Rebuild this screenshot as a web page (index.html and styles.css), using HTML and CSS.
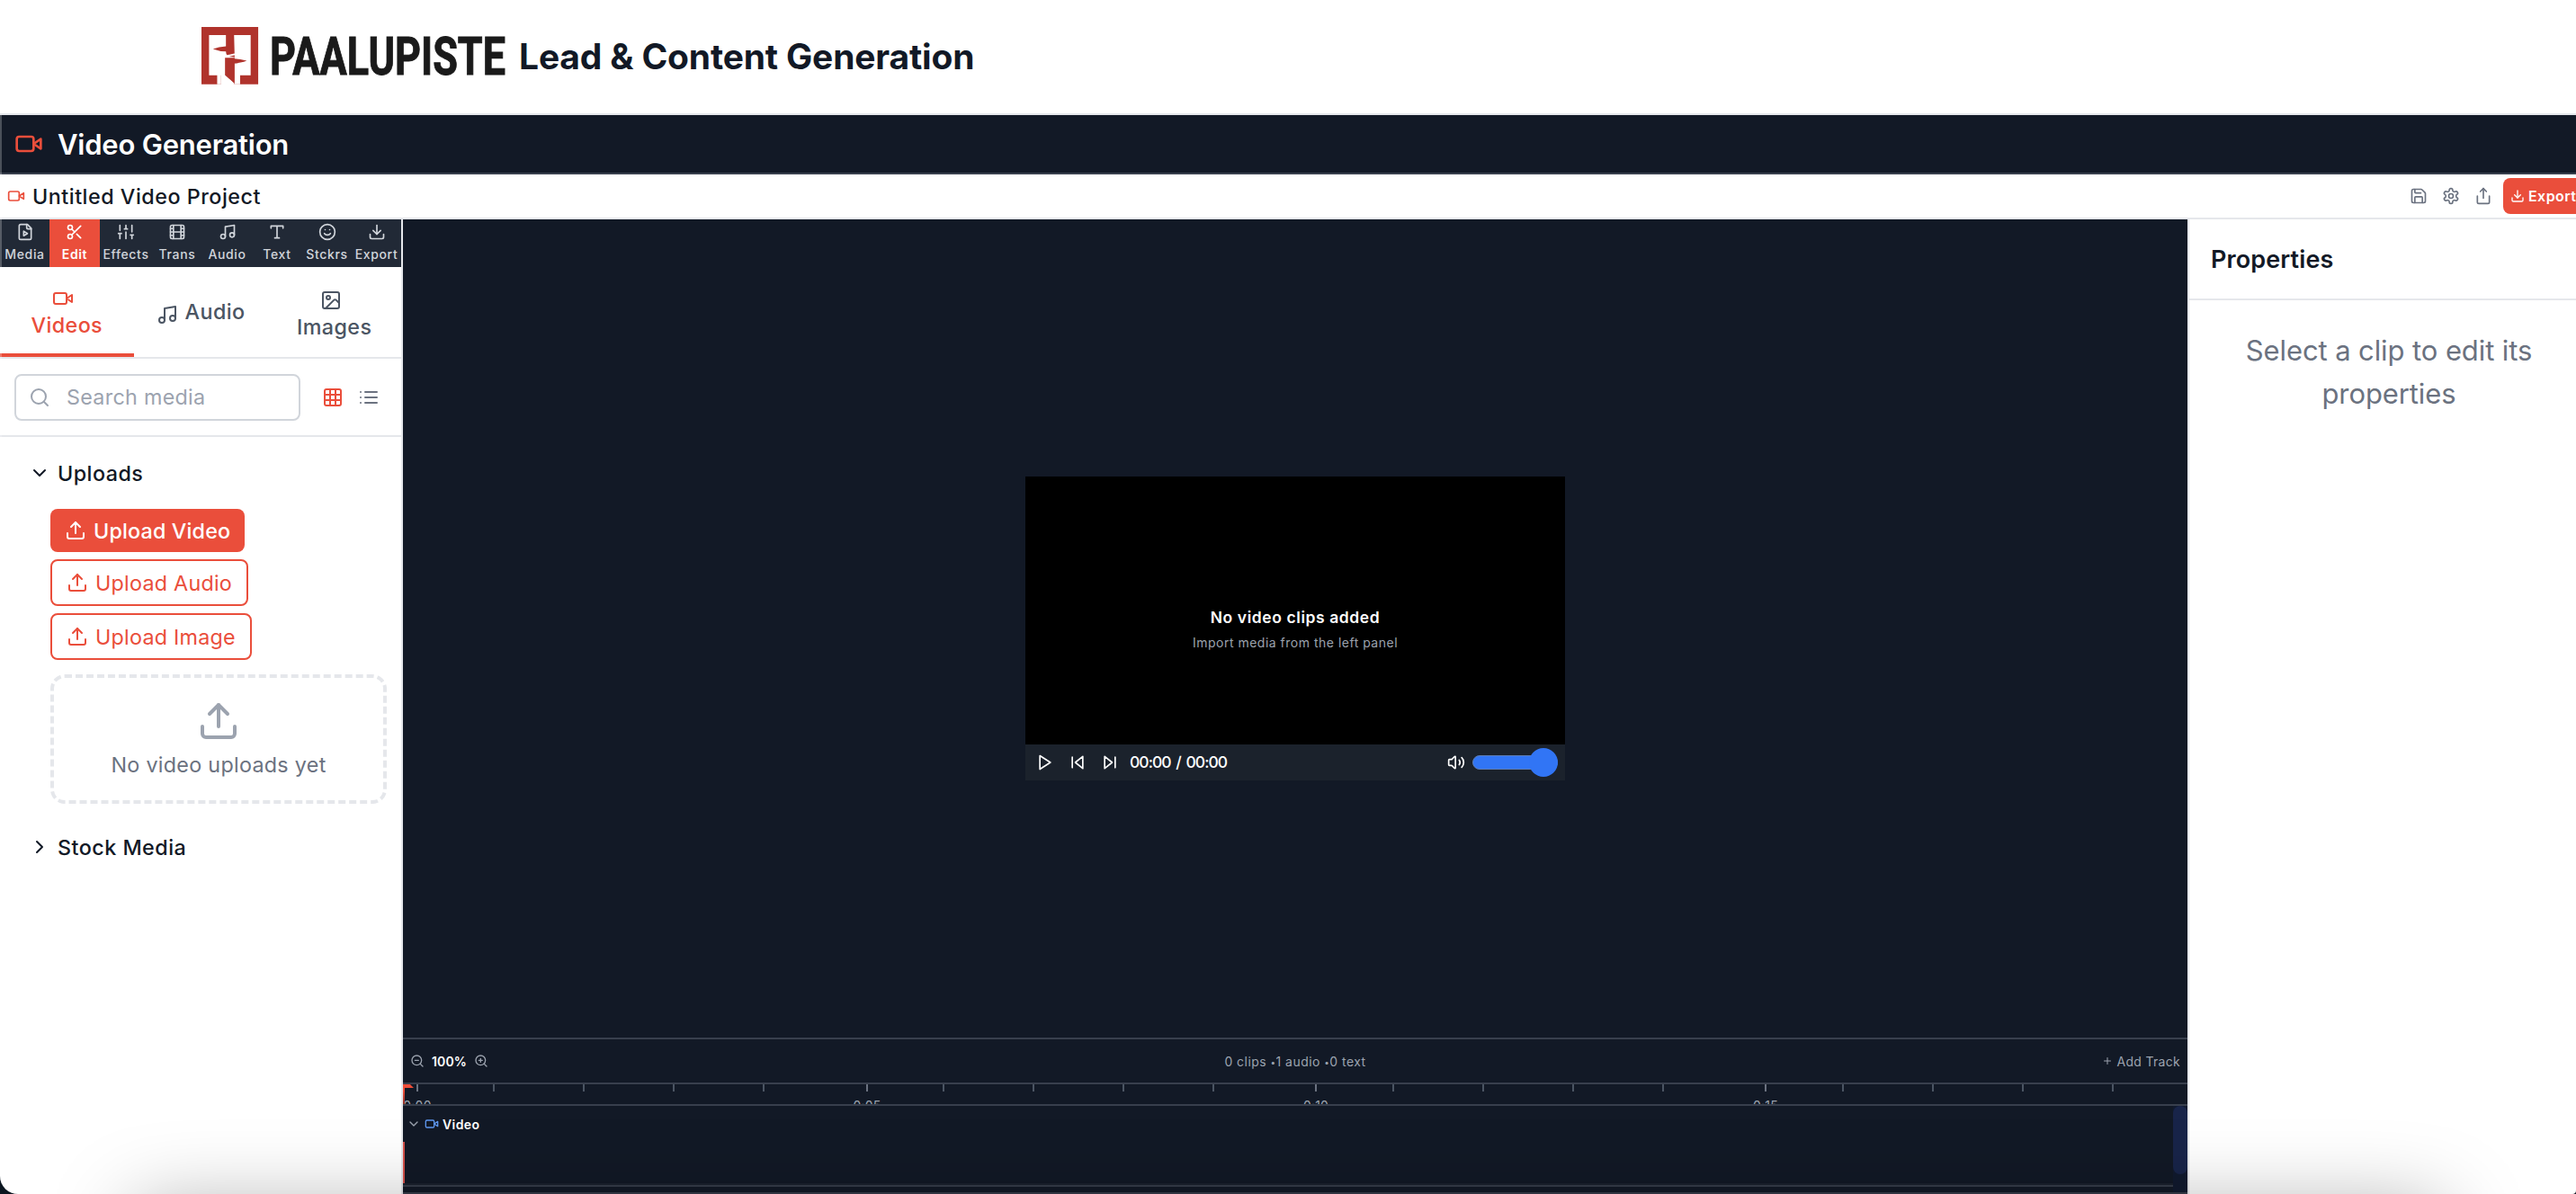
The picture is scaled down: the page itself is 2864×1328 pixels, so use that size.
FILE: index.html
```html
<!DOCTYPE html>
<html lang="en">
<head>
<meta charset="utf-8">
<title>Lead &amp; Content Generation</title>
<link rel="stylesheet" href="styles.css">
</head>
<body>
<svg class="defs" aria-hidden="true">
  <symbol id="video" viewBox="0 0 24 24"><path d="m22 8-6 4 6 4V8Z"/><rect x="2" y="6" width="14" height="12" rx="2"/></symbol>
  <symbol id="save" viewBox="0 0 24 24"><path d="M15.2 3a2 2 0 0 1 1.4.6l3.8 3.8a2 2 0 0 1 .6 1.4V19a2 2 0 0 1-2 2H5a2 2 0 0 1-2-2V5a2 2 0 0 1 2-2z"/><path d="M17 21v-7a1 1 0 0 0-1-1H8a1 1 0 0 0-1 1v7"/><path d="M7 3v4a1 1 0 0 0 1 1h7"/></symbol>
  <symbol id="settings" viewBox="0 0 24 24"><path d="M12.22 2h-.44a2 2 0 0 0-2 2v.18a2 2 0 0 1-1 1.73l-.43.25a2 2 0 0 1-2 0l-.15-.08a2 2 0 0 0-2.73.73l-.22.38a2 2 0 0 0 .73 2.73l.15.1a2 2 0 0 1 1 1.72v.51a2 2 0 0 1-1 1.74l-.15.09a2 2 0 0 0-.73 2.73l.22.38a2 2 0 0 0 2.73.73l.15-.08a2 2 0 0 1 2 0l.43.25a2 2 0 0 1 1 1.73V20a2 2 0 0 0 2 2h.44a2 2 0 0 0 2-2v-.18a2 2 0 0 1 1-1.73l.43-.25a2 2 0 0 1 2 0l.15.08a2 2 0 0 0 2.73-.73l.22-.39a2 2 0 0 0-.73-2.73l-.15-.08a2 2 0 0 1-1-1.74v-.5a2 2 0 0 1 1-1.74l.15-.09a2 2 0 0 0 .73-2.73l-.22-.38a2 2 0 0 0-2.73-.73l-.15.08a2 2 0 0 1-2 0l-.43-.25a2 2 0 0 1-1-1.73V4a2 2 0 0 0-2-2z"/><circle cx="12" cy="12" r="3"/></symbol>
  <symbol id="share" viewBox="0 0 24 24"><path d="M4 12v8a2 2 0 0 0 2 2h12a2 2 0 0 0 2-2v-8"/><path d="m16 6-4-4-4 4"/><path d="M12 2v13"/></symbol>
  <symbol id="download" viewBox="0 0 24 24"><path d="M21 15v4a2 2 0 0 1-2 2H5a2 2 0 0 1-2-2v-4"/><path d="m7 10 5 5 5-5"/><path d="M12 15V3"/></symbol>
  <symbol id="upload" viewBox="0 0 24 24"><path d="M21 15v4a2 2 0 0 1-2 2H5a2 2 0 0 1-2-2v-4"/><path d="m17 8-5-5-5 5"/><path d="M12 3v12"/></symbol>
  <symbol id="file-video" viewBox="0 0 24 24"><path d="M15 2H6a2 2 0 0 0-2 2v16a2 2 0 0 0 2 2h12a2 2 0 0 0 2-2V7Z"/><path d="M14 2v4a2 2 0 0 0 2 2h4"/><path d="m10 11 5 3-5 3v-6Z"/></symbol>
  <symbol id="scissors" viewBox="0 0 24 24"><circle cx="6" cy="6" r="3"/><path d="M8.12 8.12 12 12"/><path d="M20 4 8.12 15.88"/><circle cx="6" cy="18" r="3"/><path d="M14.8 14.8 20 20"/></symbol>
  <symbol id="sliders" viewBox="0 0 24 24"><path d="M4 21v-7M4 10V3M12 21v-9M12 8V3M20 21v-5M20 12V3M2 14h4M10 8h4M18 16h4"/></symbol>
  <symbol id="film" viewBox="0 0 24 24"><rect x="3" y="3" width="18" height="18" rx="2"/><path d="M7 3v18M3 7.5h4M3 12h18M3 16.5h4M17 3v18M17 7.5h4M17 16.5h4"/></symbol>
  <symbol id="music" viewBox="0 0 24 24"><path d="M9 18V5l12-2v13"/><circle cx="6" cy="18" r="3"/><circle cx="18" cy="16" r="3"/></symbol>
  <symbol id="type" viewBox="0 0 24 24"><path d="M4 7V4h16v3M9 20h6M12 4v16"/></symbol>
  <symbol id="smile" viewBox="0 0 24 24"><circle cx="12" cy="12" r="10"/><path d="M8 14s1.500 2 4 2 4-2 4-2M9 9h.01M15 9h.01"/></symbol>
  <symbol id="image" viewBox="0 0 24 24"><rect x="3" y="3" width="18" height="18" rx="2"/><circle cx="9" cy="9" r="2"/><path d="m21 15-3.086-3.086a2 2 0 0 0-2.828 0L6 21"/></symbol>
  <symbol id="search" viewBox="0 0 24 24"><circle cx="11" cy="11" r="8"/><path d="m21 21-4.3-4.3"/></symbol>
  <symbol id="zoom-out" viewBox="0 0 24 24"><circle cx="11" cy="11" r="8"/><path d="m21 21-4.35-4.35M8 11h6"/></symbol>
  <symbol id="zoom-in" viewBox="0 0 24 24"><circle cx="11" cy="11" r="8"/><path d="m21 21-4.35-4.35M11 8v6M8 11h6"/></symbol>
  <symbol id="grid" viewBox="0 0 24 24"><rect x="3" y="3" width="18" height="18" rx="2"/><path d="M3 9h18M3 15h18M9 3v18M15 3v18"/></symbol>
  <symbol id="list" viewBox="0 0 24 24"><path d="M8 6h13M8 12h13M8 18h13M3 6h.01M3 12h.01M3 18h.01"/></symbol>
  <symbol id="chev-down" viewBox="0 0 24 24"><path d="m6 9 6 6 6-6"/></symbol>
  <symbol id="chev-right" viewBox="0 0 24 24"><path d="m9 18 6-6-6-6"/></symbol>
  <symbol id="play" viewBox="0 0 24 24"><path d="m5 3 14 9-14 9V3z"/></symbol>
  <symbol id="prev" viewBox="0 0 24 24"><path d="M19 20 9 12l10-8v16zM5 19V5"/></symbol>
  <symbol id="next" viewBox="0 0 24 24"><path d="m5 4 10 8-10 8V4zM19 5v14"/></symbol>
  <symbol id="volume" viewBox="0 0 24 24"><path d="M11 4.702a.705.705 0 0 0-1.203-.498L6.413 7.587A1.400 1.400 0 0 1 5.416 8H3a1 1 0 0 0-1 1v6a1 1 0 0 0 1 1h2.416a1.400 1.400 0 0 1 .997.413l3.383 3.384A.705.705 0 0 0 11 19.298z"/><path d="M16 9a5 5 0 0 1 0 6"/><path d="M19.364 18.364a9 9 0 0 0 0-12.728"/></symbol>
  <symbol id="plus" viewBox="0 0 24 24"><path d="M5 12h14M12 5v14"/></symbol>
</svg>

<div class="page">
  <header class="brand">
    <svg class="logo" viewBox="0 0 340 64" role="img" aria-label="Paalupiste">
      <g transform="scale(.3355) translate(-27 -30)">
        <path class="logo-mark" d="M27 30h188v190H27z"/>
        <path class="logo-cut" d="M52 57h56v37q-24 2-43 9 20 8 43 8 0 8 4 12l24-5 2 5-20 5q24 0 60 14-18 7-41 9v68l-45-29v30h-13v-30H52zM135 57h55v133h-35v30h-18v-68q24-4 40-10-18-7-40-9z"/>
        <path class="logo-mark" d="M105 132h32v88l-32-30z"/>
        <path class="logo-cut" d="M92 190h13l31 27v4H92z"/>
        <path class="logo-mark" d="M130 134q28 2 47 8-18 8-47 9z"/>
      </g>
      <g transform="translate(76 53) scale(.753 1)"><text class="logo-text" textLength="348" lengthAdjust="spacingAndGlyphs">PAALUPISTE</text></g>
    </svg>
    <h1 class="brand-title">Lead &amp; Content Generation</h1>
  </header>

  <div class="section-bar">
    <svg class="i i32 red"><use href="#video"/></svg>
    <h2 class="section-title">Video Generation</h2>
  </div>

  <div class="project-bar">
    <svg class="i i20 red"><use href="#video"/></svg>
    <span class="project-name">Untitled Video Project</span>
    <div class="project-actions">
      <svg class="i i20"><use href="#save"/></svg>
      <svg class="i i20"><use href="#settings"/></svg>
      <svg class="i i20"><use href="#share"/></svg>
      <button class="export"><svg class="i i16"><use href="#download"/></svg><span>Export</span></button>
    </div>
  </div>

  <div class="workspace">
    <aside class="sidebar">
      <nav class="tools">
        <a class="tool"><svg class="i i20"><use href="#file-video"/></svg>Media</a>
        <a class="tool active"><svg class="i i20"><use href="#scissors"/></svg>Edit</a>
        <a class="tool"><svg class="i i20"><use href="#sliders"/></svg>Effects</a>
        <a class="tool"><svg class="i i20"><use href="#film"/></svg>Trans</a>
        <a class="tool"><svg class="i i20"><use href="#music"/></svg>Audio</a>
        <a class="tool"><svg class="i i20"><use href="#type"/></svg>Text</a>
        <a class="tool"><svg class="i i20"><use href="#smile"/></svg>Stckrs</a>
        <a class="tool"><svg class="i i20"><use href="#download"/></svg>Export</a>
      </nav>
      <div class="tabs">
        <div class="tab active"><svg class="i i24"><use href="#video"/></svg><span>Videos</span></div>
        <div class="tab inline"><svg class="i i24"><use href="#music"/></svg><span>Audio</span></div>
        <div class="tab images"><svg class="i i24"><use href="#image"/></svg><span>Images</span></div>
      </div>
      <div class="search-row">
        <div class="search"><svg class="i i24"><use href="#search"/></svg><span>Search media</span></div>
        <svg class="i i24 red"><use href="#grid"/></svg>
        <svg class="i i24 muted"><use href="#list"/></svg>
      </div>
      <div class="library">
        <div class="group"><svg class="i i24"><use href="#chev-down"/></svg><span>Uploads</span></div>
        <div class="uploads">
          <button class="up solid"><svg class="i i24"><use href="#upload"/></svg><span>Upload Video</span></button>
          <button class="up"><svg class="i i24"><use href="#upload"/></svg><span>Upload Audio</span></button>
          <button class="up wide"><svg class="i i24"><use href="#upload"/></svg><span>Upload Image</span></button>
          <div class="dropzone"><svg class="i i48"><use href="#upload"/></svg><span>No video uploads yet</span></div>
        </div>
        <div class="group"><svg class="i i24"><use href="#chev-right"/></svg><span>Stock Media</span></div>
      </div>
    </aside>

    <main class="editor">
      <div class="stage">
        <div class="player">
          <div class="screen">
            <p class="empty-title">No video clips added</p>
            <p class="empty-hint">Import media from the left panel</p>
          </div>
          <div class="controls">
            <svg class="i i20"><use href="#play"/></svg>
            <svg class="i i20"><use href="#prev"/></svg>
            <svg class="i i20"><use href="#next"/></svg>
            <span class="time">00:00 / 00:00</span>
            <svg class="i i20 vol"><use href="#volume"/></svg>
            <div class="slider"><div class="knob"></div></div>
          </div>
        </div>
      </div>

      <section class="timeline">
        <div class="tl-bar">
          <div class="zoom"><svg class="i i16"><use href="#zoom-out"/></svg><b>100%</b><svg class="i i16"><use href="#zoom-in"/></svg></div>
          <span class="counts">0 clips <small>•</small>1 audio <small>•</small>0 text</span>
          <div class="add"><svg class="i i12"><use href="#plus"/></svg><span>Add Track</span></div>
        </div>
        <div class="ruler">
          <div class="mark" style="left:16px"><span>0:00</span></div>
          <i class="tick" style="left:100px"></i><i class="tick" style="left:200px"></i><i class="tick" style="left:300px"></i><i class="tick" style="left:400px"></i>
          <div class="mark" style="left:516px"><span>0:05</span></div>
          <i class="tick" style="left:600px"></i><i class="tick" style="left:700px"></i><i class="tick" style="left:800px"></i><i class="tick" style="left:900px"></i>
          <div class="mark" style="left:1015px"><span>0:10</span></div>
          <i class="tick" style="left:1100px"></i><i class="tick" style="left:1200px"></i><i class="tick" style="left:1300px"></i><i class="tick" style="left:1400px"></i>
          <div class="mark" style="left:1515px"><span>0:15</span></div>
          <i class="tick" style="left:1600px"></i><i class="tick" style="left:1700px"></i><i class="tick" style="left:1800px"></i><i class="tick" style="left:1900px"></i>
          <div class="playhead"></div>
        </div>
        <div class="tracks">
          <div class="track">
            <div class="track-head"><svg class="i i16"><use href="#chev-down"/></svg><svg class="i i16 blue"><use href="#video"/></svg><b>Video</b></div>
            <div class="track-lane"></div>
          </div>
          <div class="scrollbar"><div class="thumb"></div></div>
        </div>
        <div class="tl-end"></div>
      </section>
    </main>

    <aside class="props">
      <h3 class="props-title">Properties</h3>
      <p class="props-empty">Select a clip to edit its properties</p>
    </aside>
  </div>
  <div class="dock-shadow"></div>
</div>
</body>
</html>
```

FILE: styles.css
```css
:root {
  --red: #ea4e3b;
  --ink: #121926;
  --line: #e5e7eb;
  --dark: #121926;
  --dark-line: #383f4d;
}
* { box-sizing: border-box; margin: 0; padding: 0; }
html { background: #0c1620; }
body { font-family: Inter, "Liberation Sans", sans-serif; font-size: 23.3px; color: var(--ink); overflow: hidden; }
button { font: inherit; border: 0; background: none; }
.defs { position: absolute; width: 0; height: 0; }

.i { flex: none; display: block; fill: none; stroke: currentColor; stroke-width: 2; stroke-linecap: round; stroke-linejoin: round; }
.i12 { width: 12px; height: 12px; }
.i16 { width: 16px; height: 16px; }
.i20 { width: 20px; height: 20px; }
.i24 { width: 24px; height: 24px; }
.i32 { width: 32px; height: 32px; }
.i48 { width: 48px; height: 48px; }
.red { color: var(--red); }
.muted { color: #6b7280; }
.blue { color: #5e97ee; }

.page { position: relative; width: 2864px; height: 1328px; display: flex; flex-direction: column; overflow: hidden; background: #fff; border-radius: 0 0 4px 20px; }
/* window edge highlight */
.page::after { content: ""; position: absolute; left: 0; top: 128px; bottom: 0; width: 2px; background: rgba(255, 255, 255, .24); }

.brand { flex: none; height: 128px; padding-left: 224px; display: flex; align-items: center; border-bottom: 2px solid var(--line); }
.logo { width: 340px; height: 64px; margin: 0 13px 2px 0; }
.logo-mark { fill: #b0332c; }
.logo-cut { fill: #fff; }
.logo-text { font: 700 59px Roboto, sans-serif; fill: #1a1a1a; stroke: #1a1a1a; stroke-width: 1; }
.brand-title { font-size: 39px; font-weight: 700; letter-spacing: -.17px; line-height: 56px; }

.section-bar { flex: none; height: 66px; padding-left: 16px; display: flex; align-items: center; gap: 16px; background: var(--dark); border-bottom: 2px solid var(--dark-line); color: #fff; }
.section-title { font-size: 31px; font-weight: 600; letter-spacing: -.22px; }

.project-bar { flex: none; height: 50px; width: 2880px; padding-left: 8px; display: flex; align-items: center; gap: 8px; border-bottom: 2px solid var(--line); }
.project-name { font-weight: 500; letter-spacing: .52px; }
.project-actions { margin-left: auto; display: flex; align-items: center; gap: 16px; color: #6b7280; }
.export { width: 97px; height: 40px; margin-left: -4px; padding-left: 8px; display: flex; align-items: center; gap: 4px; border-radius: 8px; background: var(--red); color: #fff; font-size: 16px; font-weight: 600; letter-spacing: .43px; }

.workspace { flex: 1; min-height: 0; display: flex; width: 2882px; }

.sidebar { flex: none; width: 448px; border-right: 2px solid var(--line); display: flex; flex-direction: column; }
.tools { height: 53px; display: grid; grid-template-columns: 55px 56px 58px 56px 55px 56px 55px 55px; background: #212936; }
.tool { min-width: 0; padding-top: 4px; display: flex; flex-direction: column; align-items: center; gap: 4px; color: #d1d5db; font-size: 14px; font-weight: 500; line-height: 22px; letter-spacing: .65px; white-space: nowrap; }
.tool.active { background: var(--red); color: #fff; font-weight: 600; }
.tabs { height: 102px; display: flex; border-bottom: 2px solid var(--line); color: #4b5563; font-weight: 500; letter-spacing: .4px; line-height: 36px; }
.tab { flex: 1; display: flex; flex-direction: column; align-items: center; padding-top: 23px; }
.tab .i { margin-right: 8px; }
.tab.active { color: var(--red); border-bottom: 4px solid var(--red); }
.tab.images { padding-top: 25px; }
.tab.inline { flex-direction: row; justify-content: center; padding: 0; }
.tab.inline .i { margin-top: 5px; }
.search-row { height: 87px; padding: 0 24px 0 16px; display: flex; align-items: center; gap: 16px; border-bottom: 2px solid var(--line); }
.search { width: 318px; height: 52px; margin-right: 8px; padding-left: 14px; display: flex; align-items: center; gap: 18px; border: 2px solid #d1d5db; border-radius: 8px; color: #9ca3af; letter-spacing: .3px; }

.library { padding: 24px 16px 0 32px; }
.group { height: 32px; display: flex; align-items: center; gap: 8px; font-weight: 500; letter-spacing: .48px; }
.uploads { padding: 24px 0 32px 24px; display: flex; flex-direction: column; align-items: flex-start; gap: 8px; }
.up { width: 220px; height: 52px; padding-left: 16px; display: flex; align-items: center; gap: 8px; border: 2px solid var(--red); border-radius: 8px; color: var(--red); letter-spacing: .25px; white-space: nowrap; }
.up.solid { width: 216px; height: 48px; border: 0; background: var(--red); color: #fff; font-weight: 500; letter-spacing: .17px; }
.up.wide { width: 224px; }
.dropzone { width: 374px; height: 144px; margin-top: 8px; padding-top: 24px; display: flex; flex-direction: column; align-items: center; gap: 7px; border: 4px dashed var(--line); border-radius: 16px; color: #6b7280; line-height: 36px; letter-spacing: .3px; }
.dropzone .i { color: #9ca3af; }

.editor { flex: none; width: 1984px; display: flex; flex-direction: column; background: var(--dark); }
.stage { flex: 1; display: flex; justify-content: center; align-items: center; padding-bottom: 1px; }
.player { width: 600px; height: 338px; display: flex; flex-direction: column; background: #000; }
.screen { flex: 1; padding-top: 143px; text-align: center; color: #fff; }
.empty-title { font-size: 17.500px; font-weight: 600; line-height: 28px; letter-spacing: .58px; }
.empty-hint { margin-top: 2px; font-size: 14px; line-height: 24px; letter-spacing: .5px; color: #9ca3af; }
.controls { height: 40px; padding: 0 8px 0 12px; display: flex; align-items: center; gap: 16px; background: #1b222c; color: #fff; }
.time { margin-left: -4px; font-size: 17.500px; font-weight: 500; letter-spacing: -.97px; word-spacing: 2px; }
.vol { margin-left: auto; }
.slider { position: relative; width: 95px; height: 16px; margin-left: -8px; border: 1px solid #5d7db5; border-radius: 8px; background: #3175f5; }
.knob { position: absolute; right: -1px; top: -9px; width: 32px; height: 32px; border-radius: 50%; background: #3175f5; }

.timeline { flex: none; height: 174px; border-top: 2px solid var(--dark-line); display: flex; flex-direction: column; font-size: 14px; color: #9ca3af; }
.tl-bar { height: 50px; padding: 0 8px; display: grid; grid-template-columns: 1fr auto 1fr; align-items: center; border-bottom: 2px solid var(--dark-line); letter-spacing: .45px; }
.counts small { font-size: 10px; position: relative; top: -1px; }
.zoom { display: flex; align-items: center; gap: 8px; }
.zoom b, .track-head b { color: #fff; font-weight: 600; letter-spacing: .15px; }
.add { justify-self: end; display: flex; align-items: center; gap: 5px; letter-spacing: .3px; }
.ruler { position: relative; height: 24px; border-bottom: 2px solid var(--dark-line); overflow: hidden; }
.tick, .mark { position: absolute; top: 0; }
.tick { width: 2px; height: 8px; background: #4b5563; }
.mark { width: 0; display: flex; justify-content: center; }
.mark::before { content: ""; position: absolute; left: -1px; top: 0; width: 2px; height: 8px; background: #6b7280; }
.mark span { margin-top: 16px; line-height: 16px; letter-spacing: .2px; }
.playhead { position: absolute; left: 0; top: 0; width: 12px; height: 22px; background: linear-gradient(#ee4d38 35%, #8a302b) left / 2px 100% no-repeat; }
.playhead::before { content: ""; position: absolute; left: 0; top: 0; width: 12px; height: 4px; background: #ee4d38; clip-path: polygon(0 0, 66% 0, 100% 100%, 0 100%); }
.tracks { height: 96px; display: flex; }
.track { flex: 1; display: flex; flex-direction: column; }
.track-head { height: 40px; padding-left: 4px; display: flex; align-items: center; gap: 4px; }
.track-head b { letter-spacing: .4px; }
.track-lane { height: 50px; border-bottom: 2px solid #363c49; background: linear-gradient(#d5504a, #d5504a) 0 0 / 2px 46px no-repeat, linear-gradient(#1b212e, #1b212e) 0 46px / 100% 2px no-repeat; }
.scrollbar { width: 16px; background: #111a2f; }
.thumb { height: 76px; border-radius: 8px; background: #182449; }
.tl-end { height: 2px; background: #373c49; }

.props { flex: none; width: 450px; border-left: 2px solid var(--line); }
.props-title { height: 90px; padding-left: 24px; display: flex; align-items: center; border-bottom: 2px solid var(--line); font-size: 27px; font-weight: 600; letter-spacing: .1px; }
.props-empty { padding: 32px 34px 32px 30px; text-align: center; font-size: 31px; line-height: 48px; letter-spacing: -.1px; color: #6b7280; }

.dock-shadow { position: absolute; left: 150px; top: 1345px; width: 2565px; height: 100px; box-shadow: 0 0 90px rgba(0, 0, 0, .34); }
```
